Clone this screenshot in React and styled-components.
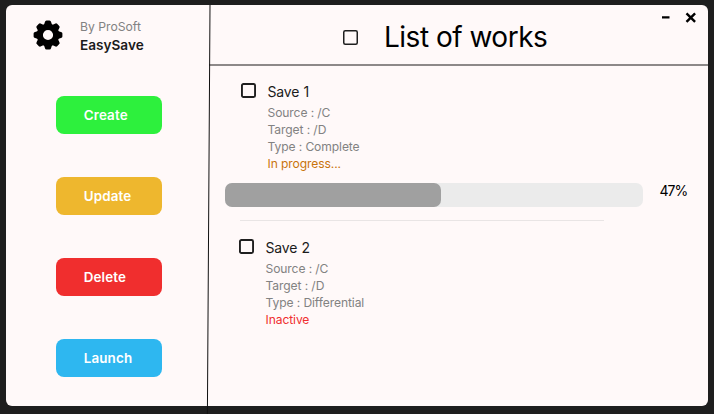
import React from 'react';
import styled, { createGlobalStyle } from 'styled-components';

const GlobalStyle = createGlobalStyle`
  * { box-sizing: border-box; }
  body { margin: 0; background: #1e1e1e; font-family: Inter, sans-serif; }
`;

const Desktop = styled.div`
  position: relative;
  width: 714px;
  height: 414px;
  padding: 5px 6px 8px;
  overflow: hidden;
  background: #1e1e1e;
`;

const Window = styled.div`
  display: flex;
  width: 702px;
  height: 401px;
  border-radius: 6px;
  background: #fff9f9;
  overflow: hidden;
`;

const Sidebar = styled.aside`
  width: 203px;
  flex: none;
  display: flex;
  flex-direction: column;
  padding: 13px 0 0 27px;
`;

const Brand = styled.div`
  display: flex;
  gap: 17px;
  height: 78px;
`;

const GearIcon = styled.svg`
  width: 30px;
  height: 30px;
  margin-top: 2px;
`;

const BrandText = styled.div`
  font-size: 12.2px;
  line-height: 18px;
  color: #828282;
`;

const BrandName = styled.div`
  font-size: 13.6px;
  font-weight: 600;
  color: #1b1b1b;
`;

const Actions = styled.nav`
  display: flex;
  flex-direction: column;
  gap: 43px;
  padding-left: 23px;
`;

const ActionButton = styled.button`
  width: 106px;
  height: 38px;
  padding: 0 0 0 27.7px;
  border: 0;
  border-radius: 8px;
  background: ${(p) => p.$color};
  color: #fff;
  font: 600 13.4px/38px Inter, sans-serif;
  letter-spacing: 0.15px;
  text-align: left;
`;

const Main = styled.main`
  flex: 1;
  display: flex;
  flex-direction: column;
`;

const Header = styled.header`
  display: flex;
  height: 61px;
  border-bottom: 2px solid #8d8989;
`;

const Heading = styled.div`
  display: flex;
  align-items: center;
  gap: 26px;
  padding: 5px 0 0 134px;
  flex: 1;
`;

const Title = styled.h1`
  margin: 0;
  font-size: 28px;
  font-weight: 400;
  line-height: 34px;
  letter-spacing: -0.5px;
  color: #000;
  white-space: nowrap;
`;

const CheckboxIcon = styled.svg`
  flex: none;
  width: 15px;
  height: 15px;
`;

const WindowControls = styled.svg`
  width: 44px;
  height: 24px;
  flex: none;
  margin-right: 8px;
`;

const Work = styled.section`
  display: flex;
  gap: 11.5px;
  padding-left: ${(p) => p.$indent}px;
  padding-top: ${(p) => p.$top}px;
`;

const WorkDetails = styled.div`
  font-size: 12.1px;
  line-height: 17px;
  letter-spacing: -0.1px;
  color: #828282;
`;

const WorkName = styled.h2`
  margin: 0 0 4px;
  font-size: 14px;
  font-weight: 400;
  line-height: 17px;
  letter-spacing: -0.2px;
  word-spacing: 0.6px;
  color: #1b1b1b;
`;

const Status = styled.div`
  color: ${(p) => p.$color};
`;

const ProgressRow = styled.div`
  display: flex;
  gap: 17px;
  margin: 11px 0 13px 16px;
`;

const Track = styled.div`
  width: 417.5px;
  height: 24px;
  border-radius: 7px;
  background: #ebebeb;
`;

const Fill = styled.div`
  height: 100%;
  border-radius: 7px;
  background: #a0a0a0;
`;

const Percent = styled.span`
  font-size: 14px;
  line-height: 16px;
  letter-spacing: -1px;
  color: #000;
`;

const Separator = styled.div`
  width: 364px;
  height: 1px;
  margin-left: 31px;
  background: #e9e5e5;
`;

const SideDivider = styled.svg`
  position: absolute;
  inset: 0;
  width: 714px;
  height: 414px;
  pointer-events: none;
`;

const actions = [
  ['Create', '#2df03d'],
  ['Update', '#eeb72e'],
  ['Delete', '#f02e2e'],
  ['Launch', '#2eb7f0'],
];

const toothAngles = [0, 45, 90, 135, 180, 225, 270, 315];

function Gear() {
  return (
    <GearIcon viewBox="-15 -15 30 30">
      <circle r="8.2" fill="none" stroke="#000" strokeWidth="6.2" />
      {toothAngles.map((angle) => (
        <path
          key={angle}
          d="M-4.1-10L-3.1-12.9Q-2.8-14.4-1.5-14.4H1.5Q2.8-14.4 3.1-12.9L4.1-10Z"
          transform={`rotate(${angle})`}
        />
      ))}
    </GearIcon>
  );
}

function Checkbox({ stroke }) {
  return (
    <CheckboxIcon viewBox="0 0 15 15">
      <rect
        x={stroke / 2}
        y={stroke / 2}
        width={15 - stroke}
        height={15 - stroke}
        rx="1.5"
        fill="none"
        stroke="#1f1f1f"
        strokeWidth={stroke}
      />
    </CheckboxIcon>
  );
}

function WorkItem({ name, type, status, color, indent, top }) {
  return (
    <Work $indent={indent} $top={top}>
      <Checkbox stroke={1.9} />
      <WorkDetails>
        <WorkName>{name}</WorkName>
        <div>Source : /C</div>
        <div>Target : /D</div>
        <div>Type : {type}</div>
        <Status $color={color}>{status}</Status>
      </WorkDetails>
    </Work>
  );
}

export default function App() {
  const progress = 47;
  return (
    <Desktop>
      <GlobalStyle />
      <Window>
        <Sidebar>
          <Brand>
            <Gear />
            <BrandText>
              <div>By ProSoft</div>
              <BrandName>EasySave</BrandName>
            </BrandText>
          </Brand>
          <Actions>
            {actions.map(([label, color]) => (
              <ActionButton key={label} $color={color}>{label}</ActionButton>
            ))}
          </Actions>
        </Sidebar>
        <Main>
          <Header>
            <Heading>
              <Checkbox stroke={1.5} />
              <Title>List of works</Title>
            </Heading>
            <WindowControls viewBox="0 0 44 24" fill="none" stroke="#000">
              <path d="M6 12.3h7.5" strokeWidth="2.2" />
              <path d="M30.5 8.3l8.6 8.6M39.1 8.3l-8.6 8.6" strokeWidth="2.4" />
            </WindowControls>
          </Header>
          <WorkItem name="Save 1" type="Complete" status="In progress..." color="#c9740b" indent={32} top={17} />
          <ProgressRow>
            <Track>
              <Fill style={{ width: `${progress * 1.103}%` }} />
            </Track>
            <Percent>{progress}%</Percent>
          </ProgressRow>
          <Separator />
          <WorkItem name="Save 2" type="Differential" status="Inactive" color="#f02e2e" indent={30} top={18.4} />
        </Main>
      </Window>
      <SideDivider viewBox="0 0 714 414">
        <path d="M210 5L207.4 414" stroke="#111" strokeWidth="1" />
      </SideDivider>
    </Desktop>
  );
}
